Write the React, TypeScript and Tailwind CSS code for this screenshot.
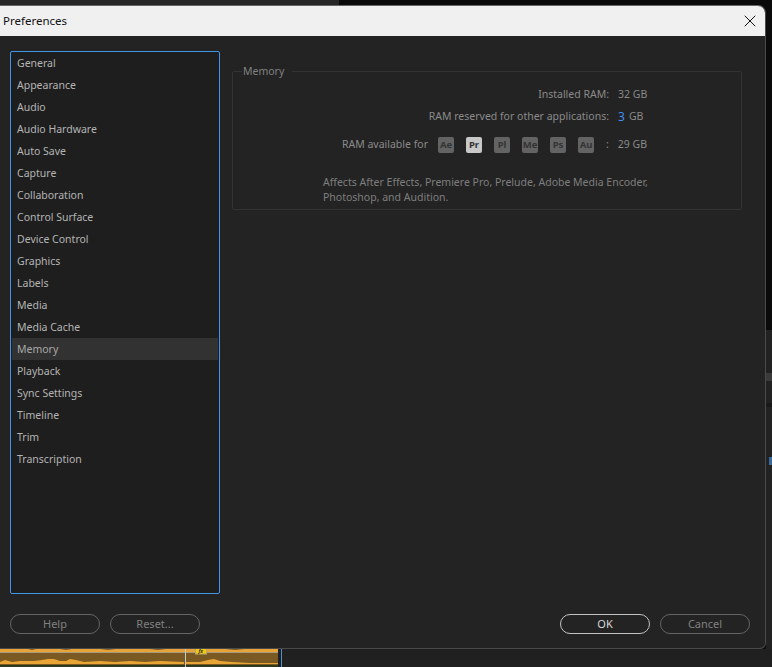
import { X } from 'lucide-react';

const CATEGORIES = [
  'General',
  'Appearance',
  'Audio',
  'Audio Hardware',
  'Auto Save',
  'Capture',
  'Collaboration',
  'Control Surface',
  'Device Control',
  'Graphics',
  'Labels',
  'Media',
  'Media Cache',
  'Memory',
  'Playback',
  'Sync Settings',
  'Timeline',
  'Trim',
  'Transcription',
];

const APPS = ['Ae', 'Pr', 'Pl', 'Me', 'Ps', 'Au'];

function PillButton({ label, primary }: { label: string; primary?: boolean }) {
  return (
    <button
      type="button"
      className={
        primary
          ? 'h-[20px] w-[90px] rounded-full border-[1.5px] border-[#c4c4c4] pb-[2px] text-[11px] leading-none text-[#d8d8d8]'
          : 'h-[20px] w-[90px] rounded-full border-[1.5px] border-[#646464] pb-[2px] text-[11px] leading-none text-[#808080]'
      }
    >
      {label}
    </button>
  );
}

function Row({ label, children }: { label: React.ReactNode; children: React.ReactNode }) {
  return (
    <div className="flex items-center">
      <div className="flex w-[376px] items-center justify-end">{label}</div>
      <div className="ml-[9px] flex items-center">{children}</div>
    </div>
  );
}

function Waveform() {
  return (
    <svg width="278" height="18" viewBox="0 0 278 18" className="block">
      <rect width="278" height="18" fill="#7a5a22" />
      <path
        d="M0 0 L278 0 L278 3 L0 3 Z"
        fill="#e9a436"
      />
      <path
        d="M28 0 L32 1 L36 0 Z M60 0 L66 1 L72 0 Z M100 0 L108 1 L116 0 Z M150 0 L158 1 L166 0 Z M225 0 L235 1 L245 0 Z"
        fill="#7a5a22"
      />
      <rect y="3" width="278" height="1" fill="#a89a80" />
      <path
        d="M0 13 L5 11 L12 13 L20 12 L34 12 L42 11 L48 10 L54 10 L60 12 L66 12 L70 10 L76 11 L84 13 L100 12 L115 13 L130 12 L145 13 L160 12 L184 13 L184 15 L0 15 Z M186 13 L200 13 L208 11 L214 10 L220 12 L232 13 L250 14 L278 14 L278 15 L186 15 Z"
        fill="#e9a436"
      />
      <rect y="16" width="278" height="2" fill="#2f3a1c" />
      <rect x="185" y="0" width="1" height="18" fill="#c8c8c8" />
      <rect x="195" y="0" width="12" height="5.5" fill="#b8a766" />
      <rect x="196" y="0" width="10" height="4.5" fill="#f2c811" />
      <text x="198.5" y="4.4" fontSize="5" fontStyle="italic" fontWeight="bold" fill="#333333">
        fx
      </text>
    </svg>
  );
}

export default function App() {
  return (
    <div
      className="flex h-[667px] w-[772px] flex-col overflow-hidden bg-[#0a0a0a]"
      style={{ fontFamily: '"Noto Sans", "Open Sans", sans-serif' }}
    >
      <div className="flex h-[5px] shrink-0">
        <div className="h-full w-[339px] bg-[#262626]" />
      </div>

      <div className="flex h-[644px] shrink-0">
        <div className="flex h-full w-[766px] shrink-0 flex-col overflow-hidden rounded-br-[6px] rounded-tr-[8px] border-b border-r border-t border-[#4a4a4a] border-t-[#666666] bg-[#232323]">
          <div className="flex h-[30px] shrink-0 items-center justify-between bg-[#f0f0f0] pl-[3px] pr-[5px]">
            <span className="text-[11.5px] text-[#111111]">Preferences</span>
            <X size={20} strokeWidth={1.2} className="text-[#111111]" />
          </div>

          <div className="flex flex-1 flex-col px-[10px] pb-[14px] pt-[15px]">
            <div className="flex flex-1 gap-[12px]">
              <ul className="h-[543px] w-[210px] rounded-[2px] border border-[#3f96e6] bg-[#1e1e1e] px-px">
                {CATEGORIES.map((c) => (
                  <li
                    key={c}
                    className={
                      c === 'Memory'
                        ? 'flex h-[22px] items-center bg-[#323232] pl-[5px] pt-[2px] text-[10.5px] text-[#a8a8a8]'
                        : 'flex h-[22px] items-center pl-[5px] pt-[2px] text-[10.5px] text-[#b4b4b4]'
                    }
                  >
                    {c}
                  </li>
                ))}
              </ul>

              <fieldset className="mt-[13px] h-[146px] w-[510px] rounded-[2px] border border-[#333333] px-[9px]">
                <legend className="px-px pr-[8px] text-[10.5px] leading-[14px] text-[#808080]">Memory</legend>
                <div className="-ml-[9px] flex flex-col pt-[6px] text-[10.5px] text-[#8a8a8a]">
                  <div className="flex h-[22px] flex-col justify-center">
                    <Row label="Installed RAM:">
                      <span>32 GB</span>
                    </Row>
                  </div>
                  <div className="flex h-[22px] flex-col justify-center">
                    <Row label="RAM reserved for other applications:">
                      <span className="text-[12px] text-[#3f8fee]">3</span>
                      <span className="ml-[4px]">GB</span>
                    </Row>
                  </div>
                  <div className="mt-[6px] flex h-[22px] items-center">
                    <span className="flex w-[195px] justify-end">RAM available for</span>
                    <div className="ml-[10px] flex gap-[12px]">
                      {APPS.map((a) => (
                        <span
                          key={a}
                          className={
                            a === 'Pr'
                              ? 'flex h-[16px] w-[16px] items-center justify-center rounded-[2px] bg-[#c8c8c8] text-[9.5px] font-bold text-[#333333]'
                              : 'flex h-[16px] w-[16px] items-center justify-center rounded-[2px] bg-[#636363] text-[9.5px] font-bold text-[#343434]'
                          }
                        >
                          {a}
                        </span>
                      ))}
                    </div>
                    <span className="ml-[12px]">:</span>
                    <span className="ml-[9px]">29 GB</span>
                  </div>
                  <p className="ml-[90px] mt-[19px] w-[360px] text-[10.5px] leading-[15px] text-[#7e7e7e]">
                    Affects After Effects, Premiere Pro, Prelude, Adobe Media Encoder,
                    <br />
                    Photoshop, and Audition.
                  </p>
                </div>
              </fieldset>
            </div>

            <div className="flex items-center justify-between pr-[5px]">
              <div className="flex gap-[10px]">
                <PillButton label="Help" />
                <PillButton label="Reset..." />
              </div>
              <div className="flex gap-[10px]">
                <PillButton label="OK" primary />
                <PillButton label="Cancel" />
              </div>
            </div>
          </div>
        </div>

        <div className="flex h-full flex-1 flex-col">
          <div className="h-[325px]" />
          <div className="flex flex-1 flex-col bg-[#222222]">
            <div className="mt-[43px] h-[8px] w-[6px] bg-[#3a3a3a]" />
            <div className="mt-[22px] h-[4px] bg-[#191919]" />
            <div className="ml-[3px] mt-[50px] h-[8px] w-[3px] bg-[#3a6a9a]" />
          </div>
        </div>
      </div>

      <div className="flex h-[18px] items-start bg-[#202020]">
        <Waveform />
        <div className="ml-[3px] h-[18px] w-px bg-[#4a90d9]" />
      </div>
    </div>
  );
}
